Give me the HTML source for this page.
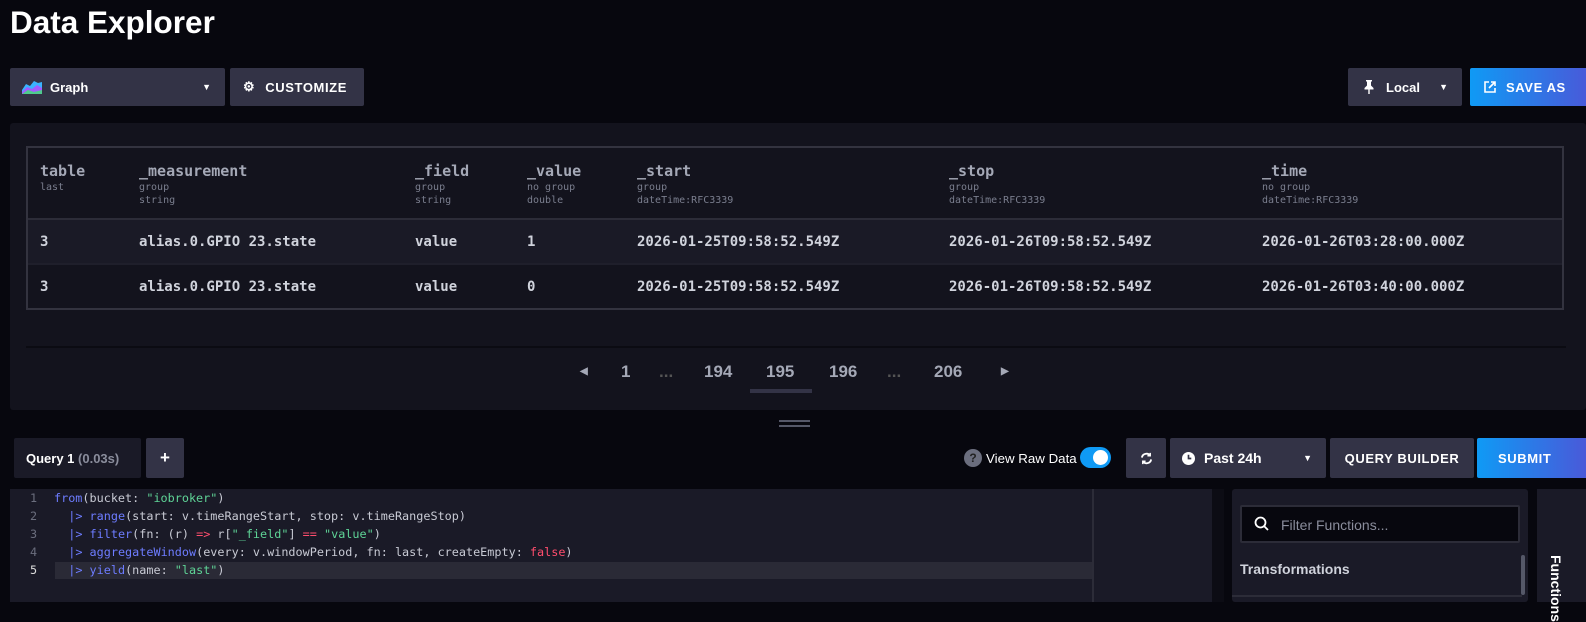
<!DOCTYPE html>
<html><head><style>
*{box-sizing:border-box;margin:0;padding:0}
body{width:1586px;height:602px;overflow:hidden;background:#07070e;font-family:"Liberation Sans",sans-serif;color:#fff;position:relative}
.a{position:absolute}
.btn{position:absolute;background:#333346;border-radius:2px;font-weight:bold;font-size:13px;display:flex;align-items:center}
.mono{font-family:"DejaVu Sans Mono","Liberation Mono",monospace}
.h{position:absolute;top:162px;font-weight:bold;font-size:15px;color:#a4a8b6}
.s{position:absolute;top:181px;font-size:10px;color:#7a7e8e;line-height:13px}
.c{position:absolute;font-weight:bold;font-size:14px;color:#d0d3dc}
.pg{position:absolute;top:362px;font-weight:bold;font-size:17px;color:#a4a8b6}
.code{position:absolute;left:54px;font-size:11.8px;color:#c8cad4;white-space:pre}
.ln{position:absolute;left:30px;font-size:11.8px;color:#6b6e7e}
.f{color:#6d7cff}.g{color:#5fd497}.r{color:#ff4d6d}
</style></head><body>
<div class="a" style="left:10px;top:4px;font-size:31.5px;font-weight:bold">Data Explorer</div>

<div class="btn" style="left:10px;top:68px;width:215px;height:38px;padding-left:12px">
<svg width="20" height="14" viewBox="0 0 20 14"><path d="M0 10 L4 4 L8 6 L12 1 L16 3 L20 2 L20 14 L0 14Z" fill="#3ab4ff"/><path d="M0 12 L5 7 L10 9 L15 5 L20 8 L20 14 L0 14Z" fill="#a15cff"/><path d="M0 14 L6 10 L12 12 L20 10 L20 14Z" fill="#4ecb8e"/></svg>
<span style="margin-left:8px">Graph</span><span style="position:absolute;right:14px;font-size:9px">▼</span></div>
<div class="btn" style="left:230px;top:68px;width:134px;height:38px;padding-left:13px;letter-spacing:.6px"><span style="font-size:13px">⚙</span><span style="margin-left:10px">CUSTOMIZE</span></div>

<div class="btn" style="left:1348px;top:68px;width:114px;height:38px;padding-left:16px"><svg width="10" height="14" viewBox="0 0 10 14"><path d="M2 0h6v1.5H7v4l2.5 2.5v1.5H5.7V14H4.3V9.5H.5V8L3 5.5v-4H2z" fill="#fff"/></svg><span style="margin-left:12px">Local</span><span style="position:absolute;right:14px;font-size:9px">▼</span></div>
<div class="btn" style="left:1470px;top:68px;width:130px;height:38px;padding-left:14px;background:linear-gradient(90deg,#0f9af5,#4f53d6);letter-spacing:.6px"><svg width="12" height="12" viewBox="0 0 12 12" fill="none" stroke="#fff" stroke-width="1.6"><path d="M5 1H1v10h10V7M7 1h4v4M11 1L5 7"/></svg><span style="margin-left:10px">SAVE AS</span></div>

<div class="a" style="left:10px;top:123px;width:1576px;height:287px;background:#13131d;border-radius:3px"></div>
<div class="a" style="left:26px;top:146px;width:1538px;height:164px;border:2px solid #33333f"></div>
<div class="a" style="left:28px;top:218px;width:1534px;height:45px;background:#1a1a26;border-top:2px solid #2c2c38"></div>
<div class="a" style="left:28px;top:263px;width:1534px;height:2px;background:#1f1f2b"></div>
<div class="mono">
<div class="h" style="left:40px">table</div><div class="s" style="left:40px">last</div>
<div class="h" style="left:139px">_measurement</div><div class="s" style="left:139px">group<br>string</div>
<div class="h" style="left:415px">_field</div><div class="s" style="left:415px">group<br>string</div>
<div class="h" style="left:527px">_value</div><div class="s" style="left:527px">no group<br>double</div>
<div class="h" style="left:637px">_start</div><div class="s" style="left:637px">group<br>dateTime:RFC3339</div>
<div class="h" style="left:949px">_stop</div><div class="s" style="left:949px">group<br>dateTime:RFC3339</div>
<div class="h" style="left:1262px">_time</div><div class="s" style="left:1262px">no group<br>dateTime:RFC3339</div>
<div class="c" style="top:234px;left:40px">3</div><div class="c" style="top:234px;left:139px">alias.0.GPIO 23.state</div><div class="c" style="top:234px;left:415px">value</div><div class="c" style="top:234px;left:527px">1</div><div class="c" style="top:234px;left:637px">2026-01-25T09:58:52.549Z</div><div class="c" style="top:234px;left:949px">2026-01-26T09:58:52.549Z</div><div class="c" style="top:234px;left:1262px">2026-01-26T03:28:00.000Z</div>
<div class="c" style="top:279px;left:40px">3</div><div class="c" style="top:279px;left:139px">alias.0.GPIO 23.state</div><div class="c" style="top:279px;left:415px">value</div><div class="c" style="top:279px;left:527px">0</div><div class="c" style="top:279px;left:637px">2026-01-25T09:58:52.549Z</div><div class="c" style="top:279px;left:949px">2026-01-26T09:58:52.549Z</div><div class="c" style="top:279px;left:1262px">2026-01-26T03:40:00.000Z</div>
</div>
<div class="a" style="left:26px;top:346px;width:1540px;height:2px;background:#0b0b12"></div>
<div class="pg" style="left:580px;font-size:10px;top:366px">◀</div>
<div class="pg" style="left:621px">1</div><div class="pg" style="left:659px;color:#555">...</div>
<div class="pg" style="left:704px">194</div><div class="pg" style="left:766px">195</div><div class="pg" style="left:829px">196</div>
<div class="pg" style="left:887px;color:#555">...</div><div class="pg" style="left:934px">206</div>
<div class="pg" style="left:1001px;font-size:10px;top:366px">▶</div>
<div class="a" style="left:750px;top:389px;width:62px;height:4px;background:#333346"></div>
<div class="a" style="left:779px;top:420px;width:31px;height:2px;background:#555868"></div>
<div class="a" style="left:779px;top:425px;width:31px;height:2px;background:#555868"></div>

<div class="btn" style="left:14px;top:438px;width:127px;height:40px;padding-left:12px;background:#1a1a27">Query 1&nbsp;<span style="color:#8a8d9c">(0.03s)</span></div>
<div class="btn" style="left:146px;top:438px;width:38px;height:40px;justify-content:center;font-size:17px">+</div>

<div class="a" style="left:964px;top:449px;width:18px;height:18px;border-radius:50%;background:#6b6e7e;font-size:12px;font-weight:bold;text-align:center;line-height:18px;color:#222">?</div>
<div class="a" style="left:986px;top:451px;font-size:13.3px">View Raw Data</div>
<div class="a" style="left:1080px;top:447px;width:31px;height:21px;border-radius:11px;background:#0f9af5"><div class="a" style="left:13px;top:3px;width:15px;height:15px;border-radius:50%;background:#fff"></div></div>
<div class="btn" style="left:1126px;top:438px;width:40px;height:40px;justify-content:center"><svg width="13" height="13" viewBox="0 0 14 14" fill="none" stroke="#fff" stroke-width="2"><path d="M2 6a5 5 0 0 1 9-2M12 8a5 5 0 0 1-9 2"/><path d="M11 1v3H8M3 13v-3h3" stroke-width="1.6"/></svg></div>
<div class="btn" style="left:1170px;top:438px;width:156px;height:40px;padding-left:12px"><svg width="13" height="13" viewBox="0 0 14 14"><circle cx="7" cy="7" r="7" fill="#fff"/><path d="M7 3v4h3" stroke="#333346" stroke-width="1.8" fill="none"/></svg><span style="margin-left:9px;font-size:14px">Past 24h</span><span style="position:absolute;right:14px;font-size:9px">▼</span></div>
<div class="btn" style="left:1330px;top:438px;width:144px;height:40px;justify-content:center;letter-spacing:.6px">QUERY BUILDER</div>
<div class="btn" style="left:1477px;top:438px;width:120px;height:40px;padding-left:21px;background:linear-gradient(90deg,#0f9af5,#4f53d6);letter-spacing:.6px">SUBMIT</div>

<div class="a" style="left:10px;top:489px;width:1202px;height:113px;background:#1a1a27"></div>
<div class="a" style="left:1092px;top:489px;width:2px;height:113px;background:#2c2c38"></div>
<div class="a" style="left:55px;top:562px;width:1037px;height:17px;background:#2a2a36"></div>
<div class="a" style="left:1212px;top:489px;width:12px;height:113px;background:#0c0c14"></div>
<div class="a mono" style="top:0;left:0">
<div class="ln" style="top:491px">1</div><div class="ln" style="top:509px">2</div><div class="ln" style="top:527px">3</div><div class="ln" style="top:545px">4</div><div class="ln" style="top:563px;color:#ddd">5</div>
<div class="code" style="top:491px"><span class="f">from</span>(bucket: <span class="g">"iobroker"</span>)</div>
<div class="code" style="top:509px">  <span class="f">|&gt;</span> <span class="f">range</span>(start: v.timeRangeStart, stop: v.timeRangeStop)</div>
<div class="code" style="top:527px">  <span class="f">|&gt;</span> <span class="f">filter</span>(fn: (r) <span class="r">=&gt;</span> r[<span class="g">"_field"</span>] <span class="r">==</span> <span class="g">"value"</span>)</div>
<div class="code" style="top:545px">  <span class="f">|&gt;</span> <span class="f">aggregateWindow</span>(every: v.windowPeriod, fn: last, createEmpty: <span class="r">false</span>)</div>
<div class="code" style="top:563px">  <span class="f">|&gt;</span> <span class="f">yield</span>(name: <span class="g">"last"</span>)</div>
</div>
<div class="a" style="left:1232px;top:489px;width:296px;height:113px;background:#1a1a27;border-radius:3px"></div>
<div class="a" style="left:1240px;top:505px;width:280px;height:38px;background:#07070e;border:2px solid #2c2c38;border-radius:2px"></div>
<svg class="a" style="left:1254px;top:516px" width="15" height="15" viewBox="0 0 15 15" fill="none" stroke="#fff" stroke-width="1.8"><circle cx="6.5" cy="6.5" r="5"/><path d="M10 10l4 4"/></svg>
<div class="a" style="left:1281px;top:517px;font-size:14px;color:#8a8d9c">Filter Functions...</div>
<div class="a" style="left:1240px;top:561px;font-size:14px;font-weight:bold;color:#d0d3dc">Transformations</div>
<div class="a" style="left:1232px;top:595px;width:290px;height:2px;background:#2c2c38"></div>
<div class="a" style="left:1521px;top:555px;width:4px;height:40px;background:#555868;border-radius:2px"></div>
<div class="a" style="left:1537px;top:489px;width:49px;height:113px;background:#1a1a27"></div>
<div class="a" style="left:1548px;top:555px;font-size:14px;font-weight:bold;writing-mode:vertical-rl">Functions</div>
</body></html>
